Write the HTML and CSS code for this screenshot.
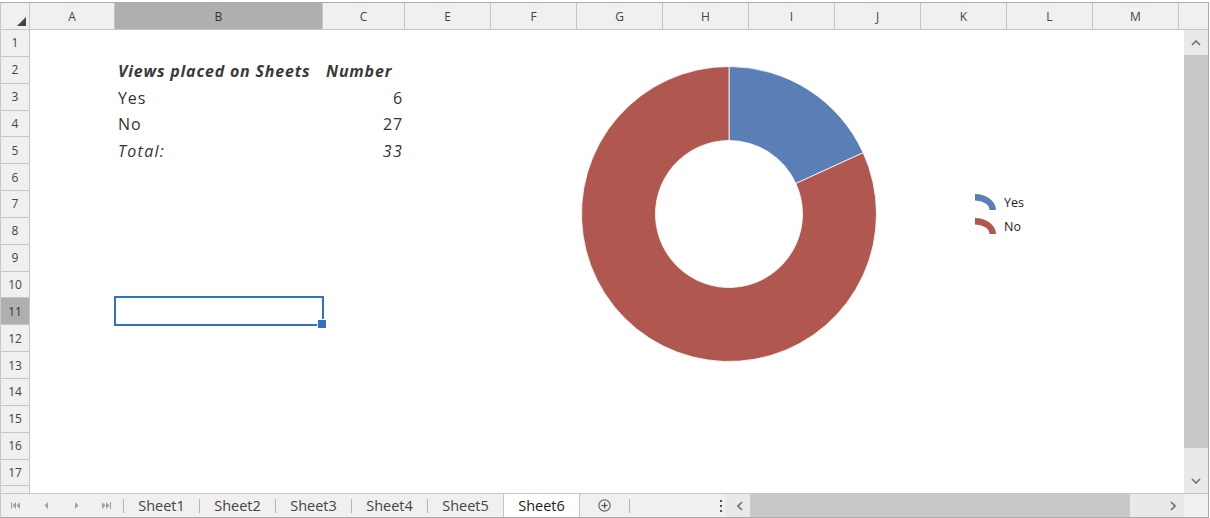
FILE: index.html
```html
<!DOCTYPE html>
<html lang="en">
<head>
    <meta charset="UTF-8">
    <title>Views placed on Sheets</title>
    <link rel="stylesheet" href="styles.css">
</head>
<body>
    <div class="book">
        <div class="colheads">
            <div class="corner"><span class="tri"></span></div>
            <div class="ch a">A</div>
            <div class="ch b sel">B</div>
            <div class="ch c">C</div>
            <div class="ch">E</div>
            <div class="ch">F</div>
            <div class="ch">G</div>
            <div class="ch">H</div>
            <div class="ch">I</div>
            <div class="ch">J</div>
            <div class="ch">K</div>
            <div class="ch">L</div>
            <div class="ch">M</div>
            <div class="ch rest"></div>
        </div>

        <div class="main">
            <div class="rowheads">
                <div class="rh">1</div>
                <div class="rh">2</div>
                <div class="rh">3</div>
                <div class="rh">4</div>
                <div class="rh">5</div>
                <div class="rh">6</div>
                <div class="rh">7</div>
                <div class="rh">8</div>
                <div class="rh">9</div>
                <div class="rh">10</div>
                <div class="rh sel">11</div>
                <div class="rh">12</div>
                <div class="rh">13</div>
                <div class="rh">14</div>
                <div class="rh">15</div>
                <div class="rh">16</div>
                <div class="rh">17</div>
                <div class="rh"></div>
            </div>

            <div class="cells">
                <div class="cell bi r2 colB">Views placed on Sheets</div>
                <div class="cell bi r2 colC">Number</div>
                <div class="cell r3 colB">Yes</div>
                <div class="cell num r3 colC">6</div>
                <div class="cell r4 colB">No</div>
                <div class="cell num r4 colC">27</div>
                <div class="cell it r5 colB">Total:</div>
                <div class="cell it num r5 colC">33</div>
                <div class="selection"></div>

                <!-- chart object floats over the grid -->
                <div class="chart">
                    <svg class="donut" width="300" height="300" viewBox="0 0 300 300">
                        <path fill="#5a7fb7" stroke="#fff" stroke-width="0.8"
                              d="M150 2.5 A147.5 147.5 0 0 1 284.17 88.73 L216.86 119.47 A73.5 73.5 0 0 0 150 76.5 Z"/>
                        <path fill="#b0584f" stroke="#fff" stroke-width="0.8"
                              d="M284.17 88.73 A147.5 147.5 0 1 1 150 2.5 L150 76.5 A73.5 73.5 0 1 0 216.86 119.47 Z"/>
                    </svg>
                </div>
                <div class="legend">
                    <div class="leg-item">
                        <svg width="24" height="18" viewBox="0 0 24 18"><path fill="#5a7fb7" d="M1 1 A21 16 0 0 1 22 17 L15.5 17 A14.5 9.5 0 0 0 1 7.5 Z"/></svg>
                        <span>Yes</span>
                    </div>
                    <div class="leg-item">
                        <svg width="24" height="18" viewBox="0 0 24 18"><path fill="#b0584f" d="M1 1 A21 16 0 0 1 22 17 L15.5 17 A14.5 9.5 0 0 0 1 7.5 Z"/></svg>
                        <span>No</span>
                    </div>
                </div>
            </div>

            <div class="vscroll">
                <div class="sbtn">
                    <svg width="10" height="6" viewBox="0 0 10 6"><polyline points="1,5 5,1 9,5" fill="none" stroke="#707070" stroke-width="1.6"/></svg>
                </div>
                <div class="vthumb"></div>
                <div class="vtrack"></div>
                <div class="sbtn">
                    <svg width="10" height="6" viewBox="0 0 10 6"><polyline points="1,1 5,5 9,1" fill="none" stroke="#707070" stroke-width="1.6"/></svg>
                </div>
            </div>
        </div>

        <div class="tabbar">
            <div class="nav">
                <span class="navbtn">
                    <svg width="10" height="7" viewBox="0 0 10 7"><rect x="0" y="0" width="1" height="7" fill="#a0a0a0"/><polygon points="5,0 1.5,3.5 5,7" fill="#a0a0a0"/><polygon points="9,0 5.5,3.5 9,7" fill="#a0a0a0"/></svg>
                </span>
                <span class="navbtn">
                    <svg width="5" height="7" viewBox="0 0 5 7"><polygon points="4,0 0.5,3.5 4,7" fill="#a0a0a0"/></svg>
                </span>
                <span class="navbtn">
                    <svg width="5" height="7" viewBox="0 0 5 7"><polygon points="1,0 4.5,3.5 1,7" fill="#a0a0a0"/></svg>
                </span>
                <span class="navbtn">
                    <svg width="10" height="7" viewBox="0 0 10 7"><polygon points="1,0 4.5,3.5 1,7" fill="#a0a0a0"/><polygon points="5,0 8.5,3.5 5,7" fill="#a0a0a0"/><rect x="9" y="0" width="1" height="7" fill="#a0a0a0"/></svg>
                </span>
            </div>
            <span class="sep"></span>
            <span class="tab">Sheet1</span>
            <span class="sep"></span>
            <span class="tab">Sheet2</span>
            <span class="sep"></span>
            <span class="tab">Sheet3</span>
            <span class="sep"></span>
            <span class="tab">Sheet4</span>
            <span class="sep"></span>
            <span class="tab">Sheet5</span>
            <span class="tab active">Sheet6</span>
            <span class="addbtn">
                <svg width="13" height="13" viewBox="0 0 13 13"><circle cx="6.5" cy="6.5" r="5.6" fill="none" stroke="#6a6a6a" stroke-width="1.2"/><rect x="6" y="3.5" width="1.3" height="6" fill="#555"/><rect x="3.5" y="5.9" width="6" height="1.3" fill="#555"/></svg>
            </span>
            <span class="sep"></span>
            <span class="gap"></span>
            <span class="splitter"><i></i><i></i><i></i></span>
            <div class="hscroll">
                <span class="hbtn left">
                    <svg width="6" height="10" viewBox="0 0 6 10"><polyline points="5,1 1,5 5,9" fill="none" stroke="#707070" stroke-width="1.6"/></svg>
                </span>
                <span class="hthumb"></span>
                <span class="htrack"></span>
                <span class="hbtn">
                    <svg width="6" height="10" viewBox="0 0 6 10"><polyline points="1,1 5,5 1,9" fill="none" stroke="#707070" stroke-width="1.6"/></svg>
                </span>
            </div>
            <span class="sizecorner"></span>
        </div>
    </div>
</body>
</html>
```

FILE: styles.css
```css
* {
    box-sizing: border-box;
}
html, body {
    margin: 0;
    padding: 0;
    background: #fff;
}
body {
    font-family: "Open Sans", Arial, sans-serif;
    color: #444;
}

.book {
    width: 1209px;
    height: 516px;
    margin-top: 2px;
    border: 1px solid #ababab;
    border-left-color: #c8c8c8;
    display: flex;
    flex-direction: column;
    overflow: hidden;
}

/* column headers */
.colheads {
    display: flex;
    height: 27px;
    flex: none;
    background: #f0f0f0;
    border-bottom: 1px solid #c6c6c6;
}
.corner {
    width: 29px;
    border-right: 1px solid #c6c6c6;
    display: flex;
    align-items: flex-end;
    justify-content: flex-end;
    padding: 0 3px 3px 0;
}
.tri {
    width: 0;
    height: 0;
    border-left: 9px solid transparent;
    border-bottom: 9px solid #454545;
}
.ch {
    width: 86px;
    border-right: 1px solid #c6c6c6;
    display: flex;
    align-items: center;
    justify-content: center;
    font-size: 12px;
    color: #444;
}
.ch.a { width: 85px; }
.ch.b { width: 208px; }
.ch.c { width: 82px; }
.ch.rest { width: 29px; border-right: none; }
.ch.sel, .rh.sel {
    background: #afafaf;
    color: #333;
}

/* sheet body */
.main {
    display: flex;
    height: 463px;
    flex: none;
}
.rowheads {
    width: 29px;
    flex: none;
    display: grid;
    grid-template-rows: repeat(17, 26.85px) 1fr;
    background: #f0f0f0;
    border-right: 1px solid #c6c6c6;
}
.rh {
    border-bottom: 1px solid #c6c6c6;
    display: flex;
    align-items: center;
    justify-content: center;
    font-size: 12px;
    color: #444;
}
.rh:last-child {
    border-bottom: none;
}

.cells {
    position: relative;
    width: 1154px;
    flex: none;
    display: grid;
    grid-template-columns: 85px 208px 82px repeat(9, 86px) 1fr;
    grid-template-rows: repeat(17, 26.85px) 1fr;
    background: #fff;
}
.cell {
    display: flex;
    align-items: flex-end;
    padding: 0 3px 2px 3px;
    font-size: 16px;
    line-height: 22px;
    letter-spacing: 0.9px;
    color: #333;
    white-space: nowrap;
}
.cell.bi {
    font-weight: 700;
    font-style: italic;
    letter-spacing: 0.8px;
    color: #3a3a3a;
}
.cell.it {
    font-style: italic;
    letter-spacing: 1.3px;
}
.cell.num {
    justify-content: flex-end;
    padding-right: 2px;
}
.r2 { grid-row: 2; }
.r3 { grid-row: 3; }
.r4 { grid-row: 4; }
.r5 { grid-row: 5; }
.colB { grid-column: 2; }
.colC { grid-column: 3; }

.selection {
    grid-row: 11;
    grid-column: 2;
    margin: -2px -1px -1px -1px;
    border: 2px solid #3172c4;
    position: relative;
}
.selection::after {
    content: "";
    position: absolute;
    right: -5px;
    bottom: -5px;
    width: 8px;
    height: 8px;
    background: #3172c4;
    border: 1px solid #fff;
}

.chart {
    position: absolute;
    left: 549px;
    top: 34px;
    width: 300px;
    height: 300px;
}
.donut {
    display: block;
}
.legend {
    position: absolute;
    left: 944px;
    top: 160px;
    display: flex;
    flex-direction: column;
}
.leg-item {
    height: 24px;
    display: flex;
    align-items: center;
    gap: 6px;
    font-size: 12.5px;
    color: #222;
}

/* vertical scrollbar */
.vscroll {
    width: 24px;
    flex: none;
    display: flex;
    flex-direction: column;
    background: #e9e9e9;
}
.sbtn {
    height: 25px;
    flex: none;
    display: flex;
    align-items: center;
    justify-content: center;
}
.vthumb {
    height: 393px;
    flex: none;
    background: #c8c8c8;
}
.vtrack {
    flex: 1;
}

/* sheet tabs + horizontal scrollbar */
.tabbar {
    height: 24px;
    flex: none;
    display: flex;
    align-items: stretch;
    background: #f0f0f0;
    border-top: 1px solid #c6c6c6;
    font-size: 14.5px;
}
.nav {
    width: 122px;
    display: flex;
}
.navbtn {
    width: 30px;
    display: flex;
    align-items: center;
    justify-content: center;
}
.sep {
    width: 1px;
    height: 14px;
    align-self: center;
    background: #b4b4b4;
}
.tab {
    width: 75px;
    display: flex;
    align-items: center;
    justify-content: center;
    color: #444;
}
.tab.active {
    width: 77px;
    background: #fff;
    color: #222;
    border-left: 1px solid #c6c6c6;
    border-right: 1px solid #c6c6c6;
}
.addbtn {
    width: 49px;
    display: flex;
    align-items: center;
    justify-content: center;
}
.gap {
    width: 86px;
}
.splitter {
    width: 9px;
    display: flex;
    flex-direction: column;
    align-items: center;
    justify-content: center;
    gap: 3px;
}
.splitter i {
    width: 2px;
    height: 2px;
    background: #505050;
}
.hscroll {
    flex: 1;
    display: flex;
    background: #e9e9e9;
}
.hbtn {
    width: 23px;
    display: flex;
    align-items: center;
    justify-content: center;
}
.hbtn.left {
    width: 25px;
    padding-left: 4px;
}
.hthumb {
    width: 380px;
    background: #c8c8c8;
}
.htrack {
    flex: 1;
}
.sizecorner {
    width: 24px;
    background: #f0f0f0;
}
```
